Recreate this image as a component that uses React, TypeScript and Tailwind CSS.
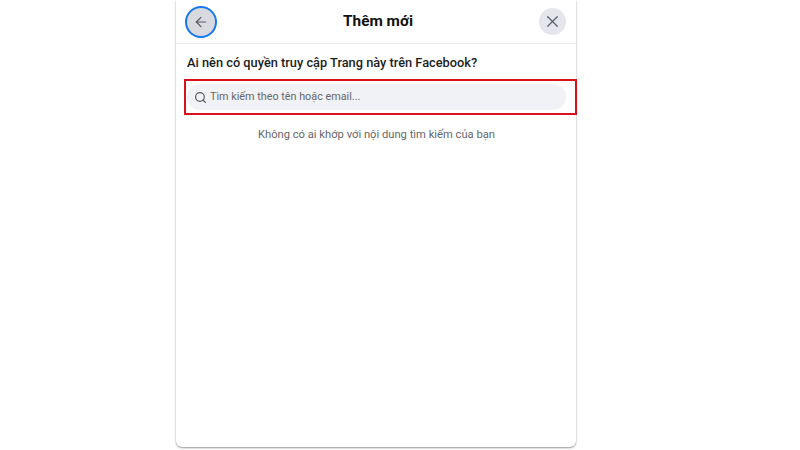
import React from "react";
import { ArrowLeft, Search, X } from "lucide-react";

export default function App() {
  return (
    <div className="h-[450px] w-[800px] overflow-hidden bg-white font-['Roboto','Liberation_Sans',sans-serif]">
      <div className="ml-[176px] flex h-[447px] w-[400px] flex-col rounded-b-md bg-white shadow-[0_1px_2px_rgba(0,0,0,0.4),0_0_1px_rgba(0,0,0,0.12)]">
        {/* Header */}
        <div className="flex h-[44px] shrink-0 items-center justify-between border-b border-[#e9eaed] pl-[9px] pr-[10px]">
          <button className="flex h-[32px] w-[32px] items-center justify-center rounded-full border-2 border-[#1877f2] bg-[#d8dadf] text-[#55585f]">
            <ArrowLeft className="h-[16px] w-[16px]" strokeWidth={1.8} />
          </button>
          <h1 className="text-[15.4px] font-bold text-[#111]">Thêm mới</h1>
          <button className="flex h-[27px] w-[27px] items-center justify-center rounded-full bg-[#e4e6eb] text-[#5b5f66]">
            <X className="h-[19px] w-[19px]" strokeWidth={1.6} />
          </button>
        </div>

        {/* Body */}
        <div className="flex flex-col pl-[11px] pr-[10px]">
          <p className="mt-[10px] text-[12.8px] font-medium leading-[18px] text-[#1c1e21]">
            Ai nên có quyền truy cập Trang này trên Facebook?
          </p>
          <div className="relative mt-[12px]">
            <div className="flex h-[26px] items-center gap-[3px] rounded-full bg-[#f0f2f5] pl-[7px] text-[#65676b]">
              <Search className="h-[13px] w-[13px] text-[#55585f]" strokeWidth={2.2} />
              <span className="text-[10.8px]">Tìm kiếm theo tên hoặc email...</span>
            </div>
            <div className="absolute -left-[3px] -right-[11px] -top-[5px] -bottom-[5px] border-2 border-[#d9111c]" />
          </div>
          <p className="mt-[17px] text-center text-[11.2px] text-[#65676b]">
            Không có ai khớp với nội dung tìm kiếm của bạn
          </p>
        </div>
      </div>
    </div>
  );
}
